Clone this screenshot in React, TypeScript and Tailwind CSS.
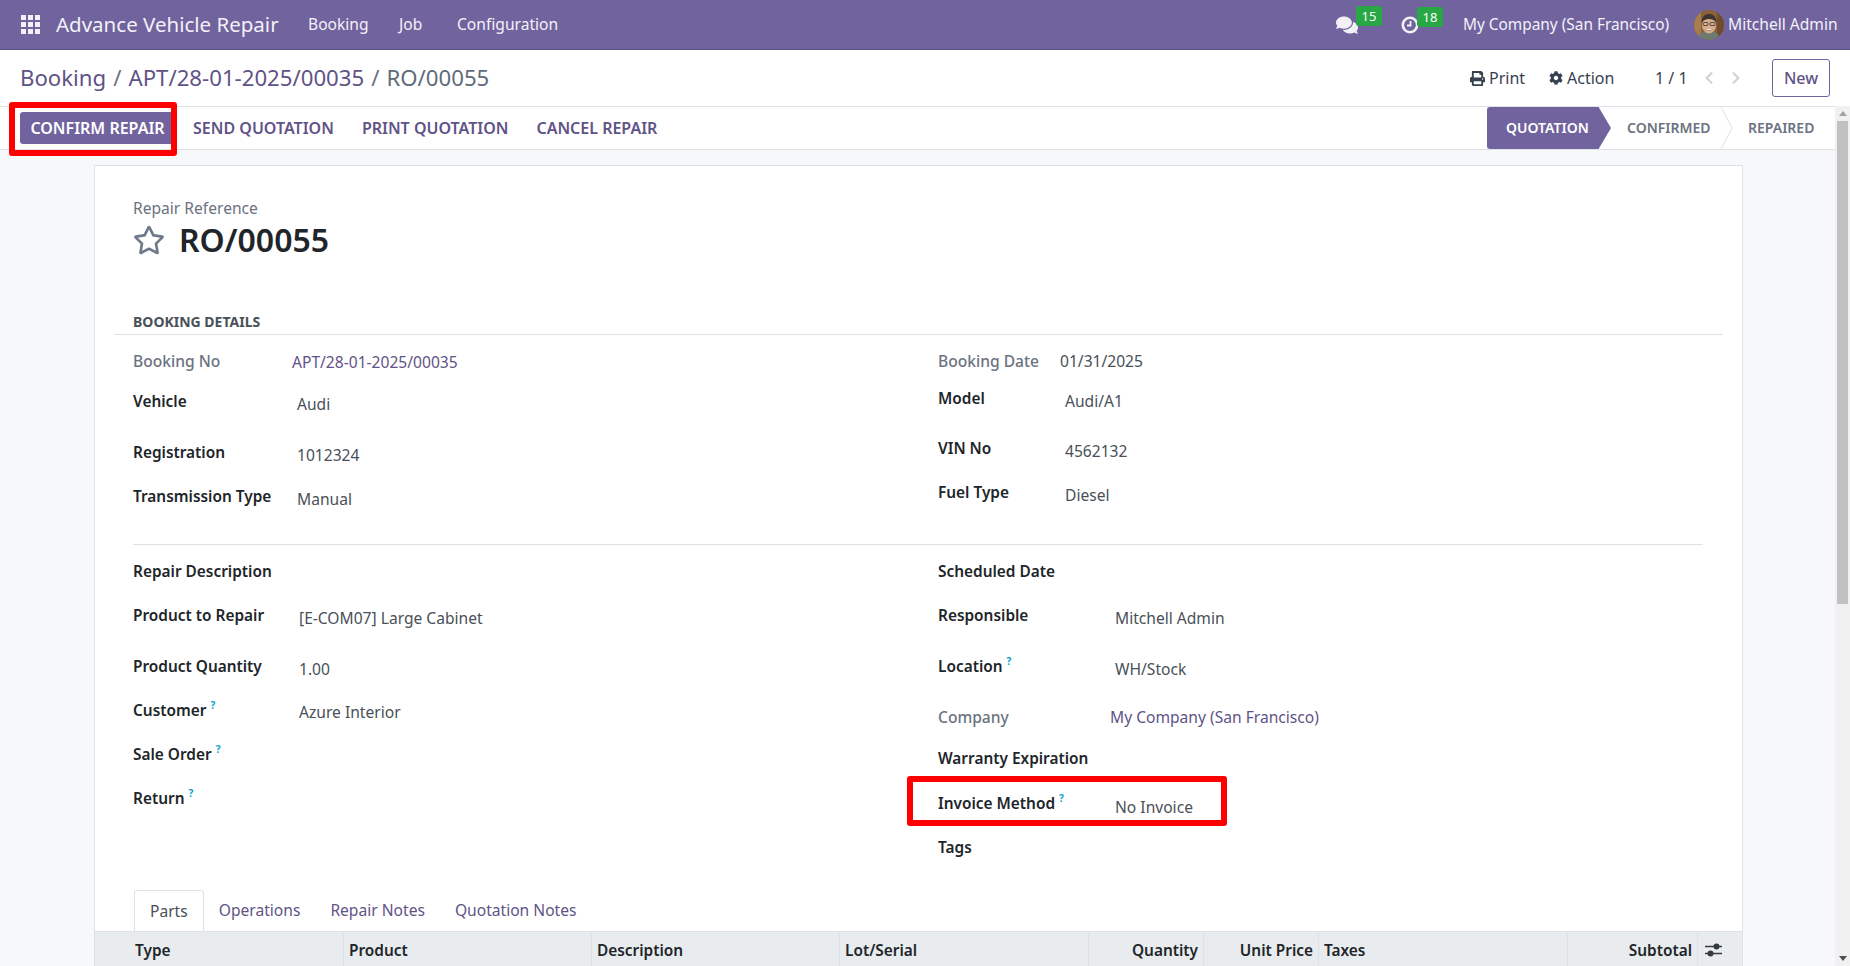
import React from 'react';
import { FaComments, FaPrint, FaCog, FaChevronLeft, FaChevronRight, FaRegStar } from 'react-icons/fa';

const AppsIcon = () => (
  <div className="grid grid-cols-3 gap-[2px] w-[19px] h-[19px]">
    {[0, 1, 2, 3, 4, 5, 6, 7, 8].map((i) => (
      <span key={i} className="bg-[#f3f1f8] block" />
    ))}
  </div>
);

const ClockIcon = () => (
  <svg width="18" height="18" viewBox="0 0 18 18" fill="none" stroke="#f3f1f8">
    <circle cx="9" cy="9" r="7.2" strokeWidth="2.600" />
    <path d="M9.500 5v4.500H6" strokeWidth="1.800" />
  </svg>
);

const SlidersIcon = () => (
  <svg width="18" height="16" viewBox="0 0 18 16" fill="#343a40" stroke="#343a40">
    <path d="M0 4.500h17M0 11.500h17" strokeWidth="1.300" />
    <circle cx="11.500" cy="4.500" r="3" stroke="none" />
    <circle cx="5.500" cy="11.500" r="3" stroke="none" />
  </svg>
);

const Avatar = () => (
  <svg width="30" height="30" viewBox="0 0 30 30" className="rounded-full">
    <rect width="30" height="30" fill="#8a6238" />
    <rect x="0" y="0" width="7" height="30" fill="#a87c4c" />
    <rect x="23" y="0" width="7" height="30" fill="#6e4c2c" />
    <path d="M4 30c1-7 5-9 11-9s10 2 11 9z" fill="#6f7a70" />
    <ellipse cx="15" cy="15" rx="7" ry="8.5" fill="#d9ad8c" />
    <path d="M7.5 13c0-6 3-9 7.5-9s7.5 3 7.5 9c-2-3-4-4-7.5-4s-5.500 1-7.500 4z" fill="#3b3431" />
    <rect x="9" y="12.500" width="5" height="3" rx="1" fill="none" stroke="#33302e" strokeWidth="0.8" />
    <rect x="16" y="12.500" width="5" height="3" rx="1" fill="none" stroke="#33302e" strokeWidth="0.8" />
    <path d="M11 19c2 2 6 2 8 0" fill="#f4ece6" stroke="#8c5a48" strokeWidth="0.6" />
  </svg>
);

const Navbar = () => (
  <nav className="h-[50px] shrink-0 bg-[#71639e] border-b border-[#5f5387] flex items-center text-[#f3f1f8] text-[15.600px]">
    <div className="ml-[21px]"><AppsIcon /></div>
    <span className="ml-[16px] text-[20.500px] w-[252px]">Advance Vehicle Repair</span>
    <span className="w-[91px]">Booking</span>
    <span className="w-[58px]">Job</span>
    <span>Configuration</span>
    <div className="ml-auto flex items-center">
      <div className="relative w-[22px] mr-[43px]">
        <FaComments size={22} className="text-[#f3f1f8]" />
        <span className="absolute left-[20px] top-[-8px] w-[26px] h-[20px] bg-[#28a745] rounded-[3px] text-white text-[13px] leading-[20px] text-center">15</span>
      </div>
      <div className="relative w-[18px] mr-[44px]">
        <ClockIcon />
        <span className="absolute left-[16px] top-[-9px] w-[26px] h-[20px] bg-[#28a745] rounded-[3px] text-white text-[13px] leading-[20px] text-center">18</span>
      </div>
      <span className="w-[231px] text-[15.400px]">My Company (San Francisco)</span>
      <Avatar />
      <span className="ml-[4px] mr-[12px] w-[110px] whitespace-nowrap">Mitchell Admin</span>
    </div>
  </nav>
);

const ControlPanel = () => (
  <div className="h-[56px] shrink-0 bg-white flex items-center pl-[20px] pr-[20px]">
    <div className="text-[22.200px] text-[#5f5387] flex gap-[7px]">
      <span>Booking</span>
      <span className="text-[#6b7280]">/</span>
      <span>APT/28-01-2025/00035</span>
      <span className="text-[#6b7280]">/</span>
      <span className="text-[#5f6b7a]">RO/00055</span>
    </div>
    <div className="ml-auto flex items-center text-[#374151] text-[16px]">
      <FaPrint size={15} />
      <span className="ml-[4px] w-[61px]">Print</span>
      <span className="ml-[-1px]"><FaCog size={14} /></span>
      <span className="ml-[4px] w-[88px]">Action</span>
      <span className="w-[47px]">1 / 1</span>
      <FaChevronLeft size={14} className="text-[#ced4da]" />
      <FaChevronRight size={14} className="text-[#ced4da] ml-[13px]" />
      <button className="ml-[29px] w-[58px] h-[38px] border border-[#71639e] rounded-[3px] text-[#5f5387] font-medium bg-white">New</button>
    </div>
  </div>
);

const ActionBar = () => (
  <div className="h-[44px] shrink-0 bg-white border-y border-[#dee2e6] flex items-center pl-[20px] text-[16px] font-semibold text-[#5f5387]">
    <div className="relative">
      <button className="w-[155px] h-[32px] bg-[#71639e] text-white rounded-[3px] font-semibold">CONFIRM REPAIR</button>
      <div className="absolute left-[-11px] top-[-10px] w-[168px] h-[54px] border-[6px] border-[#fe0000] rounded-[3px]" />
    </div>
    <span className="ml-[18px]">SEND QUOTATION</span>
    <span className="ml-[28px]">PRINT QUOTATION</span>
    <span className="ml-[28px]">CANCEL REPAIR</span>
    <div className="ml-auto flex items-center h-full text-[14px]">
      <div className="w-[124px] h-full bg-[#71639e] rounded-l-[3px] text-white flex items-center pl-[19px] pb-[2px] [clip-path:polygon(0_0,90%_0,100%_50%,90%_100%,0_100%)]">QUOTATION</div>
      <span className="ml-[16px] w-[93px] text-[#6b7280] pb-[2px]">CONFIRMED</span>
      <svg width="14" height="42" viewBox="0 0 14 42">
        <path d="M1 0l11 21-11 21" fill="none" stroke="#dee2e6" />
      </svg>
      <span className="ml-[14px] w-[87px] text-[#6b7280] pb-[2px]">REPAIRED</span>
    </div>
  </div>
);

type FieldProps = {
  label: string;
  value?: string;
  h: string;
  w: string;
  help?: boolean;
  muted?: boolean;
  link?: boolean;
  vt?: string;
};

const Field = ({ label, value, h, w, help, muted, link, vt = 'pt-[2px]' }: FieldProps) => (
  <div className={`flex leading-[20px] ${h}`}>
    <div className={`${w} shrink-0 ${muted ? 'font-medium text-[#6b7280]' : 'font-semibold text-[15.400px] text-[#212529]'}`}>
      {label}
      {help && <sup className="text-[#0d9fc9] font-bold text-[10px] ml-[4px] top-[-7px]">?</sup>}
    </div>
    {value && <div className={`${vt} ${link ? 'text-[#5f5387]' : 'text-[#495057]'}`}>{value}</div>}
  </div>
);

const Tab = ({ label, active }: { label: string; active?: boolean }) => (
  <div className={`h-[41px] px-[15px] pt-[1px] flex items-center ${active ? 'bg-white border border-b-0 border-[#dee2e6] rounded-t-[3px] text-[#495057]' : 'text-[#5f5387]'}`}>
    {label}
  </div>
);

const TableHeader = () => (
  <div className="h-[36px] shrink-0 bg-[#e9ecef] border-t border-[#dee2e6] flex font-semibold text-[15.400px] text-[#212529] leading-[37px]">
    <div className="w-[249px] pl-[40px] border-r border-[#dee2e6]">Type</div>
    <div className="w-[248px] pl-[5px] border-r border-[#dee2e6]">Product</div>
    <div className="w-[248px] pl-[5px] border-r border-[#dee2e6]">Description</div>
    <div className="w-[249px] pl-[5px] border-r border-[#dee2e6]">Lot/Serial</div>
    <div className="w-[115px] pr-[5px] text-right border-r border-[#dee2e6]">Quantity</div>
    <div className="w-[115px] pr-[5px] text-right border-r border-[#dee2e6]">Unit Price</div>
    <div className="w-[249px] pl-[5px] border-r border-[#dee2e6]">Taxes</div>
    <div className="w-[130px] pr-[5px] text-right border-r border-[#dee2e6]">Subtotal</div>
    <div className="flex-1 flex items-center pl-[7px]"><SlidersIcon /></div>
  </div>
);

const Sheet = () => (
  <div className="ml-[94px] mt-[15px] w-[1649px] bg-white border-x border-t border-[#dee2e6] text-[15.600px]">
    <div className="pl-[38px] pt-[32px] h-[146px]">
      <div className="text-[#6b7280] leading-[20px]">Repair Reference</div>
      <div className="flex items-center">
        <FaRegStar size={32} className="text-[#6c7a89]" />
        <h1 className="ml-[14px] text-[32px] leading-[44px] font-semibold text-[#212529]">RO/00055</h1>
      </div>
    </div>
    <div className="ml-[19px] mr-[19px] border-b border-[#dee2e6] pl-[19px] h-[23px] mb-[16px] text-[14px] font-bold text-[#495057] leading-[20px]">
      BOOKING DETAILS
    </div>
    <div className="pl-[38px] grid grid-cols-[805px_1fr]">
      <div>
        <Field label="Booking No" value="APT/28-01-2025/00035" h="h-[41px]" w="w-[159px]" muted link vt="pt-[1px]" />
        <Field label="Vehicle" value="Audi" h="h-[51px]" w="w-[164px]" />
        <Field label="Registration" value="1012324" h="h-[44px]" w="w-[164px]" />
        <Field label="Transmission Type" value="Manual" h="h-[57px]" w="w-[164px]" />
      </div>
      <div>
        <Field label="Booking Date" value="01/31/2025" h="h-[38px]" w="w-[122px]" muted vt="" />
        <Field label="Model" value="Audi/A1" h="h-[50px]" w="w-[127px]" />
        <Field label="VIN No" value="4562132" h="h-[44px]" w="w-[127px]" />
        <Field label="Fuel Type" value="Diesel" h="h-[61px]" w="w-[127px]" />
      </div>
    </div>
    <div className="ml-[38px] mr-[39px] border-t border-[#dee2e6] mb-[17px]" />
    <div className="pl-[38px] grid grid-cols-[805px_1fr]">
      <div>
        <Field label="Repair Description" h="h-[44px]" w="w-[166px]" />
        <Field label="Product to Repair" value="[E-COM07] Large Cabinet" h="h-[51px]" w="w-[166px]" />
        <Field label="Product Quantity" value="1.00" h="h-[44px]" w="w-[166px]" />
        <Field label="Customer" value="Azure Interior" help h="h-[44px]" w="w-[166px]" vt="pt-[1px]" />
        <Field label="Sale Order" help h="h-[44px]" w="w-[166px]" />
        <Field label="Return" help h="h-[91px]" w="w-[166px]" />
      </div>
      <div>
        <Field label="Scheduled Date" h="h-[44px]" w="w-[177px]" />
        <Field label="Responsible" value="Mitchell Admin" h="h-[51px]" w="w-[177px]" />
        <Field label="Location" value="WH/Stock" help h="h-[50px]" w="w-[177px]" />
        <Field label="Company" value="My Company (San Francisco)" muted link h="h-[42px]" w="w-[172px]" vt="" />
        <Field label="Warranty Expiration" h="h-[45px]" w="w-[177px]" />
        <div className="relative">
          <Field label="Invoice Method" value="No Invoice" help h="h-[44px]" w="w-[177px]" vt="pt-[3px]" />
          <div className="absolute left-[-31px] top-[-18px] w-[320px] h-[50px] border-[6px] border-[#fe0000] rounded-[3px]" />
        </div>
        <Field label="Tags" h="h-[52px]" w="w-[177px]" />
      </div>
    </div>
    <div className="pl-[39px] flex">
      <Tab label="Parts" active />
      <Tab label="Operations" />
      <Tab label="Repair Notes" />
      <Tab label="Quotation Notes" />
    </div>
    <TableHeader />
  </div>
);

const Scrollbar = () => (
  <div className="w-[15px] shrink-0 bg-[#f1f1f1] flex flex-col items-center">
    <div className="h-[15px] flex items-center justify-center">
      <span className="w-0 h-0 border-x-[4px] border-x-transparent border-b-[5px] border-b-[#a3a3a3]" />
    </div>
    <div className="w-[11px] h-[483px] bg-[#c1c1c1]" />
    <div className="mt-auto h-[15px] flex items-center justify-center">
      <span className="w-0 h-0 border-x-[4px] border-x-transparent border-t-[5px] border-t-[#505050]" />
    </div>
  </div>
);

export default function App() {
  return (
    <div className="h-screen w-full overflow-hidden flex flex-col bg-white font-['Noto_Sans',sans-serif]">
      <Navbar />
      <ControlPanel />
      <div className="flex-1 flex min-h-0">
        <div className="flex-1 min-w-0 flex flex-col bg-[#f7f8fa]">
          <ActionBar />
          <div className="flex-1 overflow-hidden"><Sheet /></div>
        </div>
        <Scrollbar />
      </div>
    </div>
  );
}
